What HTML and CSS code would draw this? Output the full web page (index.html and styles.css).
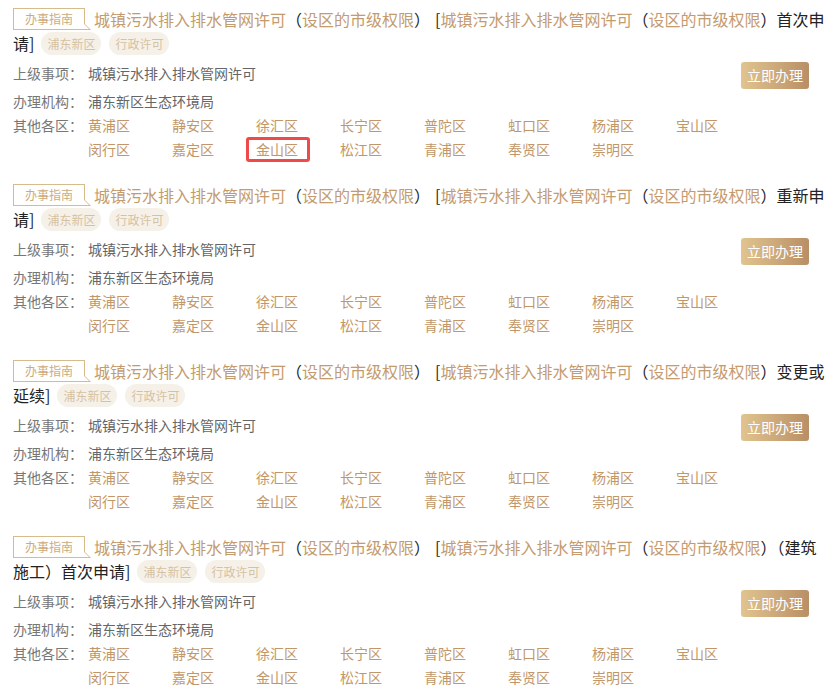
FILE: index.html
```html
<!DOCTYPE html>
<html lang="zh-CN">
<head>
<meta charset="utf-8">
<title>办事指南</title>
<link rel="stylesheet" href="styles.css">
</head>
<body>
<div class="list">

  <div class="item">
    <div class="title"><span class="tag">办事指南</span><span class="gold">城镇污水排入排水管网许可</span><span class="dark">（</span><span class="gold">设区的市级权限</span><span class="dark">）</span><span class="dark bracket">[</span><span class="gold">城镇污水排入排水管网许可</span><span class="dark">（</span><span class="gold">设区的市级权限</span><span class="dark">）首次申请]</span><span class="pill">浦东新区</span><span class="pill">行政许可</span></div>
    <div class="row first">
      <span class="label">上级事项：</span><span class="value">城镇污水排入排水管网许可</span>
      <a class="btn">立即办理</a>
    </div>
    <div class="row"><span class="label">办理机构：</span><span class="value">浦东新区生态环境局</span></div>
    <div class="row">
      <span class="label">其他各区：</span>
      <div class="districts">
        <span>黄浦区</span><span>静安区</span><span>徐汇区</span><span>长宁区</span><span>普陀区</span><span>虹口区</span><span>杨浦区</span><span>宝山区</span>
        <span>闵行区</span><span>嘉定区</span><span class="marked">金山区</span><span>松江区</span><span>青浦区</span><span>奉贤区</span><span>崇明区</span>
      </div>
    </div>
  </div>

  <div class="item">
    <div class="title"><span class="tag">办事指南</span><span class="gold">城镇污水排入排水管网许可</span><span class="dark">（</span><span class="gold">设区的市级权限</span><span class="dark">）</span><span class="dark bracket">[</span><span class="gold">城镇污水排入排水管网许可</span><span class="dark">（</span><span class="gold">设区的市级权限</span><span class="dark">）重新申请]</span><span class="pill">浦东新区</span><span class="pill">行政许可</span></div>
    <div class="row first">
      <span class="label">上级事项：</span><span class="value">城镇污水排入排水管网许可</span>
      <a class="btn">立即办理</a>
    </div>
    <div class="row"><span class="label">办理机构：</span><span class="value">浦东新区生态环境局</span></div>
    <div class="row">
      <span class="label">其他各区：</span>
      <div class="districts">
        <span>黄浦区</span><span>静安区</span><span>徐汇区</span><span>长宁区</span><span>普陀区</span><span>虹口区</span><span>杨浦区</span><span>宝山区</span>
        <span>闵行区</span><span>嘉定区</span><span>金山区</span><span>松江区</span><span>青浦区</span><span>奉贤区</span><span>崇明区</span>
      </div>
    </div>
  </div>

  <div class="item">
    <div class="title"><span class="tag">办事指南</span><span class="gold">城镇污水排入排水管网许可</span><span class="dark">（</span><span class="gold">设区的市级权限</span><span class="dark">）</span><span class="dark bracket">[</span><span class="gold">城镇污水排入排水管网许可</span><span class="dark">（</span><span class="gold">设区的市级权限</span><span class="dark">）变更或延续]</span><span class="pill">浦东新区</span><span class="pill">行政许可</span></div>
    <div class="row first">
      <span class="label">上级事项：</span><span class="value">城镇污水排入排水管网许可</span>
      <a class="btn">立即办理</a>
    </div>
    <div class="row"><span class="label">办理机构：</span><span class="value">浦东新区生态环境局</span></div>
    <div class="row">
      <span class="label">其他各区：</span>
      <div class="districts">
        <span>黄浦区</span><span>静安区</span><span>徐汇区</span><span>长宁区</span><span>普陀区</span><span>虹口区</span><span>杨浦区</span><span>宝山区</span>
        <span>闵行区</span><span>嘉定区</span><span>金山区</span><span>松江区</span><span>青浦区</span><span>奉贤区</span><span>崇明区</span>
      </div>
    </div>
  </div>

  <div class="item">
    <div class="title"><span class="tag">办事指南</span><span class="gold">城镇污水排入排水管网许可</span><span class="dark">（</span><span class="gold">设区的市级权限</span><span class="dark">）</span><span class="dark bracket">[</span><span class="gold">城镇污水排入排水管网许可</span><span class="dark">（</span><span class="gold">设区的市级权限</span><span class="dark">）（建筑施工）首次申请]</span><span class="pill">浦东新区</span><span class="pill">行政许可</span></div>
    <div class="row first">
      <span class="label">上级事项：</span><span class="value">城镇污水排入排水管网许可</span>
      <a class="btn">立即办理</a>
    </div>
    <div class="row"><span class="label">办理机构：</span><span class="value">浦东新区生态环境局</span></div>
    <div class="row">
      <span class="label">其他各区：</span>
      <div class="districts">
        <span>黄浦区</span><span>静安区</span><span>徐汇区</span><span>长宁区</span><span>普陀区</span><span>虹口区</span><span>杨浦区</span><span>宝山区</span>
        <span>闵行区</span><span>嘉定区</span><span>金山区</span><span>松江区</span><span>青浦区</span><span>奉贤区</span><span>崇明区</span>
      </div>
    </div>
  </div>

</div>
</body>
</html>
```

FILE: styles.css
```css
html, body {
  margin: 0;
  padding: 0;
  background: #ffffff;
}

body {
  font-family: "Noto Sans CJK SC", "Noto Sans", sans-serif;
  color: #333;
}

.list {
  padding: 7px 0 0 13px;
}

.item {
  margin-bottom: 22px;
}

.title {
  font-size: 16px;
  line-height: 24px;
  color: #111;
}

.gold {
  color: #c49b6e;
}

.dark {
  color: #222;
}

.bracket {
  margin-left: 5px;
}

.tag {
  position: relative;
  display: inline-block;
  vertical-align: top;
  margin-top: 1px;
  box-sizing: border-box;
  height: 22px;
  width: 71px;
  padding: 0 0 0 11px;
  border: 1px solid #d6bb8e;
  border-right: none;
  font-size: 12px;
  line-height: 20px;
  color: #cbab7e;
  margin-right: 10px;
}

.tag::after {
  content: "";
  position: absolute;
  top: -1px;
  right: -7px;
  width: 7px;
  height: 22px;
  background: url("data:image/svg+xml,%3Csvg xmlns='http://www.w3.org/2000/svg' width='7' height='22'%3E%3Cpath d='M0.5 0 V16 L6 21.5 M0 21.5 H6.5' fill='none' stroke='%23d6bb8e' stroke-width='1'/%3E%3C/svg%3E") no-repeat;
}

.pill {
  display: inline-block;
  vertical-align: top;
  margin-top: 1px;
  height: 23px;
  line-height: 23px;
  padding: 0 6px;
  margin-left: 7px;
  border-radius: 12px;
  background: #f6f1e8;
  color: #d5c2a2;
  font-size: 12px;
}

.pill + .pill {
  margin-left: 8px;
}

.row {
  display: flex;
  align-items: flex-start;
  font-size: 14px;
  line-height: 24px;
}

.row.first {
  margin-top: 6px;
}

.label {
  width: 75px;
  flex: none;
  color: #777;
}

.value {
  color: #666;
}

.btn {
  margin-left: auto;
  margin-right: 19px;
  margin-top: 1px;
  height: 27px;
  line-height: 27px;
  width: 68px;
  text-align: center;
  border-radius: 3px;
  background: linear-gradient(to right, #e1c48f, #b98f66);
  color: #fff;
  font-size: 14px;
}

.districts {
  display: grid;
  grid-template-columns: repeat(8, 84px);
}

.districts span {
  color: #c19769;
}

.districts .marked {
  position: relative;
}

.districts .marked::after {
  content: "";
  position: absolute;
  left: -10px;
  top: 0;
  width: 64px;
  height: 25px;
  box-sizing: border-box;
  border: 3px solid #ee4a4a;
  border-radius: 3px;
}
```
